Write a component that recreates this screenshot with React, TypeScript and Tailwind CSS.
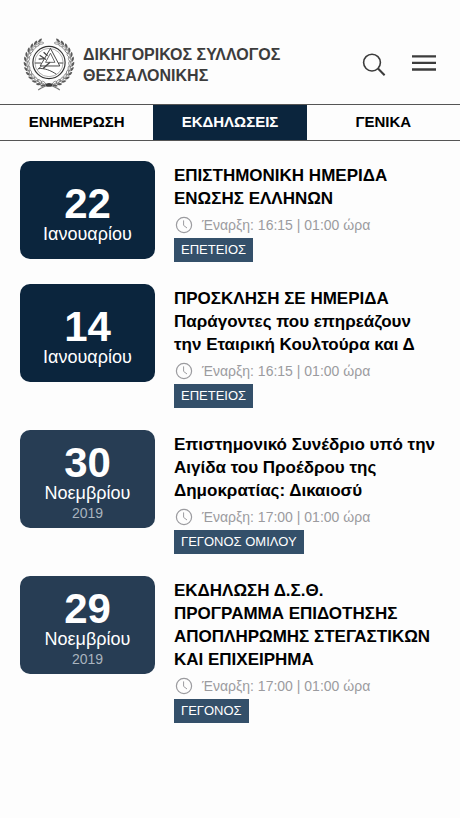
import React, { useState } from 'react';

interface EventItem {
  id: number;
  day: string;
  month: string;
  year?: string;
  title: string[];
  start: string;
  duration: string;
  tag: string;
}

const TABS = ['ΕΝΗΜΕΡΩΣΗ', 'ΕΚΔΗΛΩΣΕΙΣ', 'ΓΕΝΙΚΑ'];

const EVENTS: EventItem[] = [
  {
    id: 1,
    day: '22',
    month: 'Ιανουαρίου',
    title: ['ΕΠΙΣΤΗΜΟΝΙΚΗ ΗΜΕΡΙΔΑ', 'ΕΝΩΣΗΣ ΕΛΛΗΝΩΝ'],
    start: '16:15',
    duration: '01:00 ώρα',
    tag: 'ΕΠΕΤΕΙΟΣ',
  },
  {
    id: 2,
    day: '14',
    month: 'Ιανουαρίου',
    title: ['ΠΡΟΣΚΛΗΣΗ ΣΕ ΗΜΕΡΙΔΑ', 'Παράγοντες που επηρεάζουν', 'την Εταιρική Κουλτούρα και Δ'],
    start: '16:15',
    duration: '01:00 ώρα',
    tag: 'ΕΠΕΤΕΙΟΣ',
  },
  {
    id: 3,
    day: '30',
    month: 'Νοεμβρίου',
    year: '2019',
    title: ['Επιστημονικό Συνέδριο υπό την', 'Αιγίδα του Προέδρου της', 'Δημοκρατίας: Δικαιοσύ'],
    start: '17:00',
    duration: '01:00 ώρα',
    tag: 'ΓΕΓΟΝΟΣ ΟΜΙΛΟΥ',
  },
  {
    id: 4,
    day: '29',
    month: 'Νοεμβρίου',
    year: '2019',
    title: ['ΕΚΔΗΛΩΣΗ Δ.Σ.Θ.', 'ΠΡΟΓΡΑΜΜΑ ΕΠΙΔΟΤΗΣΗΣ', 'ΑΠΟΠΛΗΡΩΜΗΣ ΣΤΕΓΑΣΤΙΚΩΝ', 'ΚΑΙ ΕΠΙΧΕΙΡΗΜΑ'],
    start: '17:00',
    duration: '01:00 ώρα',
    tag: 'ΓΕΓΟΝΟΣ',
  },
];

// angles (degrees, clockwise from the top) of the leaf pairs on the right branch
const LEAF_ANGLES = [24, 36, 48, 60, 72, 84, 96, 108, 120, 132, 144, 156, 167];

const Branch = () => (
  <g>
    <path d="M35 3.6A24 24 0 0 1 28 49" fill="none" stroke="#777" strokeWidth="0.6" />
    {LEAF_ANGLES.map((angle) => (
      <g key={angle} transform={`rotate(${angle} 26 26)`}>
        <path d="M28 2.6C26.5 0.2 24.2 0 22.6 0.6C23.4 2.6 25.4 3.4 28 2.6Z" fill="#5a5a5a" />
        <path d="M28 3.6C26.4 6 24.2 6.4 22.8 5.6C23.6 3.8 25.6 3 28 3.6Z" fill="#fff" stroke="#666" strokeWidth="0.7" />
      </g>
    ))}
  </g>
);

const Emblem = ({ className }: { className?: string }) => (
  <svg viewBox="0 0 52 56" className={className} aria-hidden="true">
    <Branch />
    <g transform="matrix(-1 0 0 1 52 0)">
      <Branch />
    </g>
    <path d="M15 54C18 51.5 22 50.5 27 48M37 54C34 51.5 30 50.5 25 48" fill="none" stroke="#777" strokeWidth="1.1" />
    <ellipse cx="26" cy="48.8" rx="3.4" ry="1.9" fill="#3c3c3c" />
    <circle cx="26" cy="26" r="16.4" fill="#fff" stroke="#333" strokeWidth="1.2" />
    <circle cx="26" cy="26" r="14.4" fill="none" stroke="#777" strokeWidth="0.6" />
    <g fill="none" stroke="#444" strokeWidth="1">
      <path d="M27.5 11.6L17 29.5H37L27.5 11.6Z" />
      <path d="M27.5 16.5L22.5 25.8H32L27.5 16.5Z" strokeWidth="0.8" />
      <path d="M11.6 26.5H18M35.5 26.5H40.4" />
      <path d="M27 25.8L20 32" strokeWidth="1.4" />
      <path d="M16.5 18.5L23 23M20.5 15.5L24.5 19M15.5 22.5L21 22" strokeWidth="1.3" />
      <path d="M15.5 32.2C21 31.5 28 34 33.5 38M18.5 29.5L14.5 33" />
    </g>
  </svg>
);

const SearchIcon = ({ className }: { className?: string }) => (
  <svg viewBox="0 0 24 24" className={className} fill="none" stroke="#3c3c3c" aria-hidden="true">
    <circle cx="10" cy="9.6" r="8.4" strokeWidth="1.6" />
    <path d="M16 15.6L22.6 22.2" strokeWidth="2.1" />
  </svg>
);

const MenuIcon = ({ className }: { className?: string }) => (
  <svg viewBox="0 0 24 20" className={className} stroke="#3c3c3c" strokeWidth="2.3" aria-hidden="true">
    <path d="M0 1.3H24M0 7.9H24M0 14.5H24" />
  </svg>
);

const ClockIcon = ({ className }: { className?: string }) => (
  <svg viewBox="0 0 18 18" className={className} fill="none" stroke="#9b9b9f" strokeWidth="1.2" aria-hidden="true">
    <circle cx="9" cy="9" r="7.6" />
    <path d="M8.6 4.4V9.4L12 12" strokeWidth="1" />
  </svg>
);

const EventRow = ({ event }: { event: EventItem }) => (
  <li className="flex items-start gap-[19px]">
    <time
      className={`flex h-[98px] w-[135px] shrink-0 flex-col items-center rounded-[10px] text-white ${
        event.year ? 'bg-[#273d54] pt-3' : 'bg-[#0b253d] pt-[22px]'
      }`}
    >
      <span className="text-[42px] font-bold leading-[41px]">{event.day}</span>
      <span className="text-[18px] leading-5">{event.month}</span>
      {event.year && <span className="text-sm leading-5 text-[#a9b4bf]">{event.year}</span>}
    </time>
    <div className="min-w-0 flex-1 pt-[3px]">
      <h2 className="whitespace-nowrap text-[17px] font-bold leading-[23px] text-black">
        {event.title.map((line) => (
          <span key={line} className="block">{line}</span>
        ))}
      </h2>
      <p className="flex h-7 items-center gap-[9px] pl-px pt-[2px] text-sm text-[#9b9b9f]">
        <ClockIcon className="h-[18px] w-[18px]" />
        {`Έναρξη: ${event.start} | ${event.duration}`}
      </p>
      <span className="inline-block bg-[#34506a] px-[7px] align-top text-[13px] leading-6 text-white">{event.tag}</span>
    </div>
  </li>
);

export default function App() {
  const [activeTab, setActiveTab] = useState(TABS[1]);

  return (
    <div className="min-h-screen bg-[#fdfdfd] font-['Liberation_Sans',Arial,sans-serif]">
      <header className="flex items-center pb-3 pl-[23px] pr-6 pt-[37px]">
        <Emblem className="h-[55px] w-[52px] shrink-0" />
        <h1 className="ml-2 flex-1 whitespace-nowrap text-base font-bold leading-[21px] text-[#3c3c3c]">
          ΔΙΚΗΓΟΡΙΚΟΣ ΣΥΛΛΟΓΟΣ
          <br />
          ΘΕΣΣΑΛΟΝΙΚΗΣ
        </h1>
        <button type="button" aria-label="Αναζήτηση" className="mr-[26px]">
          <SearchIcon className="h-6 w-6" />
        </button>
        <button type="button" aria-label="Μενού">
          <MenuIcon className="h-5 w-6" />
        </button>
      </header>

      <nav className="grid grid-cols-3 border-y border-[#555]">
        {TABS.map((tab) => (
          <button
            key={tab}
            type="button"
            onClick={() => setActiveTab(tab)}
            className={`h-[35px] text-[15px] font-bold ${tab === activeTab ? 'bg-[#0b253d] text-white' : 'text-black'}`}
          >
            {tab}
          </button>
        ))}
      </nav>

      <main className="px-5 pt-5">
        <ul className="flex flex-col gap-[22px]">
          {EVENTS.map((event) => (
            <EventRow key={event.id} event={event} />
          ))}
        </ul>
      </main>
    </div>
  );
}
